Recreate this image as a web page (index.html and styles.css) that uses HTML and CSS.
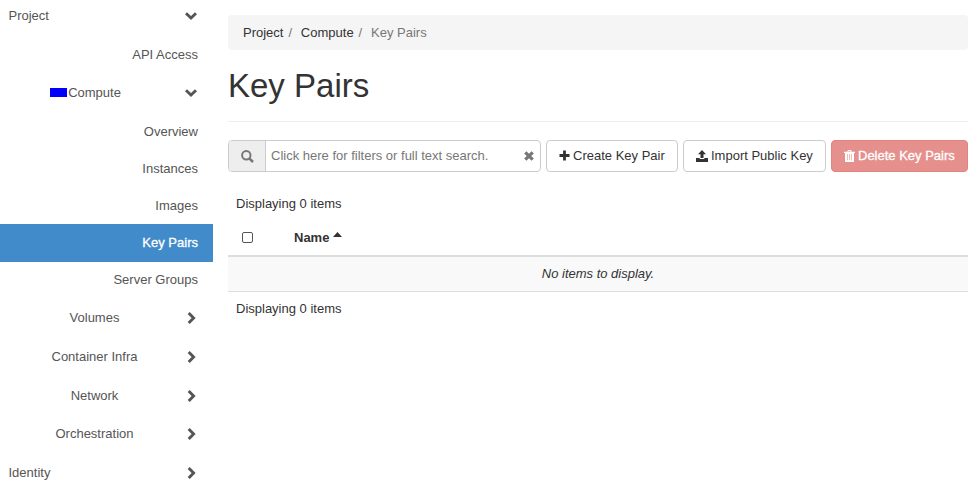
FILE: index.html
```html
<!DOCTYPE html>
<html lang="en">
<head>
<meta charset="utf-8">
<title>Key Pairs</title>
<link rel="stylesheet" href="styles.css">
</head>
<body>
<svg class="defs" width="0" height="0">
  <symbol id="down" viewBox="0 0 14 14"><path d="M2 4.3 7 9.1 12 4.3" fill="none" stroke="currentColor" stroke-width="2.9"/></symbol>
  <symbol id="right" viewBox="0 0 14 14"><path d="M4.7 2 9.6 7 4.7 12" fill="none" stroke="currentColor" stroke-width="2.9"/></symbol>
</svg>
<div class="layout">
  <nav class="sidebar">
    <a class="row top">Project<svg class="chev"><use href="#down"/></svg></a>
    <a class="row leaf lead">API Access</a>
    <a class="row group"><span class="label"><i class="marker"></i>Compute</span><svg class="chev"><use href="#down"/></svg></a>
    <a class="row leaf lead">Overview</a>
    <a class="row leaf short">Instances</a>
    <a class="row leaf short">Images</a>
    <a class="row leaf active">Key Pairs</a>
    <a class="row leaf last">Server Groups</a>
    <a class="row group"><span class="label">Volumes</span><svg class="chev"><use href="#right"/></svg></a>
    <a class="row group"><span class="label">Container Infra</span><svg class="chev"><use href="#right"/></svg></a>
    <a class="row group"><span class="label">Network</span><svg class="chev"><use href="#right"/></svg></a>
    <a class="row group end"><span class="label">Orchestration</span><svg class="chev"><use href="#right"/></svg></a>
    <a class="row top">Identity<svg class="chev"><use href="#right"/></svg></a>
  </nav>
  <main class="content">
    <div class="breadcrumb"><span>Project</span><span class="sep">/</span><span>Compute</span><span class="sep">/</span><span class="current">Key Pairs</span></div>
    <h1>Key Pairs</h1>
    <div class="toolbar">
      <div class="search">
        <span class="addon"><svg width="13" height="13" viewBox="0 0 13 13" fill="none" stroke="currentColor"><circle cx="5.3" cy="5.3" r="4.2" stroke-width="2"/><path d="M8.3 8.3 12 12" stroke-width="2.5"/></svg></span>
        <span class="placeholder">Click here for filters or full text search.</span>
        <svg class="clear" width="10" height="10" viewBox="0 0 10 10"><path d="M1.3 1.3 8.7 8.7M8.7 1.3 1.3 8.7" stroke="currentColor" stroke-width="3.2"/></svg>
      </div>
      <a class="btn create"><svg width="11" height="11" viewBox="0 0 11 11"><path d="M5.5.5v10M.5 5.5h10" stroke="currentColor" stroke-width="2.8"/></svg>Create Key Pair</a>
      <a class="btn import"><svg width="12" height="12" viewBox="0 0 12 12" fill="currentColor"><path d="M6 0 10 4.2H7.5V8h-3V4.2H2z"/><path d="M0 8h3.7v1h4.6V8H12v4H0z"/></svg>Import Public Key</a>
      <a class="btn delete"><svg width="11" height="12" viewBox="0 0 11 12"><path fill="currentColor" fill-rule="evenodd" d="M3.3 1.7 4 0h3l.7 1.7H11V3h-1v9H1V3H0V1.7zM4.4 1.7h2.2L6.3 1H4.7zM3 4v6.3h.6V4zm2.2 0v6.3h.6V4zm2.2 0v6.3H8V4z"/></svg>Delete Key Pairs</a>
    </div>
    <div class="count">Displaying 0 items</div>
    <div class="thead"><span class="check"></span><span class="name">Name</span><svg class="sort" width="9" height="5" viewBox="0 0 9 5"><path d="M0 5 4.5 0 9 5z" fill="#333"/></svg></div>
    <div class="empty">No items to display.</div>
    <div class="count foot">Displaying 0 items</div>
  </main>
</div>
</body>
</html>
```

FILE: styles.css
```css
* { box-sizing: border-box; }
body { margin: 0; background: #fff; color: #333; font: 13px/18px "Liberation Sans", Arial, sans-serif; overflow: hidden; }
.defs { display: block; }
.layout { display: flex; }
.sidebar { width: 213px; margin-top: -4px; flex: none; color: #555; }
.row { display: flex; align-items: center; height: 39px; padding: 0 15px 0 8.5px; }
.leaf { height: 38px; justify-content: flex-end; }
.lead { padding-top: 2px; }
.short { height: 37px; }
.last { height: 36px; }
.end { height: 38px; }
.active { background: #428bca; color: #fff; -webkit-text-stroke: .3px #fff; }
.group { padding-left: 0; }
.label { width: 189px; margin-right: -5px; display: flex; justify-content: center; align-items: center; }
.marker { width: 17px; height: 9px; margin: 0 1px 0 -18px; background: #00f; }
.chev { width: 14px; height: 14px; margin-left: auto; margin-top: 1px; flex: none; }
.end .chev { margin-top: 0; }
.content { width: 740px; margin-left: 15px; padding-top: 15px; }
.breadcrumb { display: flex; height: 35px; align-items: center; padding: 0 15px; background: #f5f5f5; border-radius: 4px; }
.sep { width: 17.4px; padding-left: 5px; color: #777; }
.current { color: #777; }
h1 { margin: 0 0 18px; height: 72px; padding-top: 18px; border-bottom: 1px solid #eee; font-size: 33px; line-height: 36px; font-weight: 400; }
.toolbar { display: flex; gap: 5px; height: 32px; }
.search { display: flex; width: 313px; align-items: center; border: 1px solid #ccc; border-radius: 4px; color: #777; }
.addon { display: flex; width: 37px; height: 30px; align-items: center; justify-content: center; background: #eee; border-right: 1px solid #ccc; border-radius: 3px 0 0 3px; }
.placeholder { padding-left: 5px; }
.clear { margin-left: auto; margin-right: 6px; }
.btn { display: flex; align-items: center; border: 1px solid #ccc; border-radius: 4px; padding-left: 12px; white-space: nowrap; }
.btn svg { margin-right: 3px; }
.create svg { margin-bottom: 1px; }
.create { width: 132px; }
.import { width: 143px; }
.delete { width: 137px; color: #fff; background: #e6908d; border-color: #e28380; -webkit-text-stroke: .3px #fff; }
.count { padding: 0 8px; margin-top: 23px; height: 18px; }
.thead { display: flex; align-items: center; height: 43px; padding: 6px 0 0 14px; border-bottom: 2px solid #ddd; margin-top: 1px; }
.check { width: 11px; height: 11px; border: 1px solid #555; border-radius: 2px; }
.name { margin-left: 41px; font-weight: 700; }
.sort { margin-left: 4px; margin-bottom: 7px; }
.empty { height: 35px; display: flex; align-items: center; justify-content: center; background: #f9f9f9; border-bottom: 1px solid #ddd; font-style: italic; }
.foot { margin-top: 8px; }
```
